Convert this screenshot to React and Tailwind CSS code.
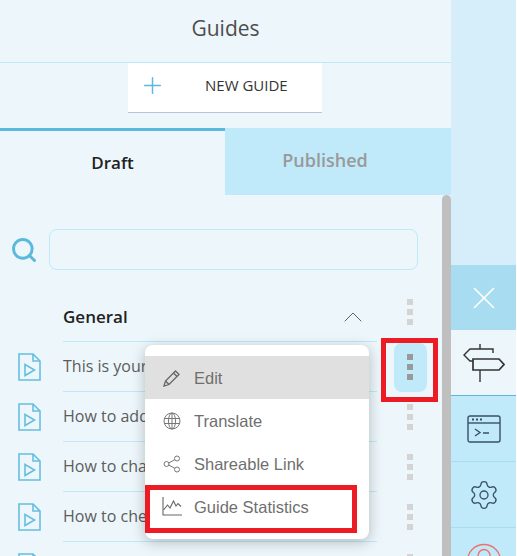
import React from 'react';
import { Plus, Search, ChevronUp, X, Settings } from 'lucide-react';

const sans = { fontFamily: '"Open Sans", "Noto Sans", sans-serif' };

// the popup covers the end of these titles, only the visible part is kept
const rows = ['This is your', 'How to add', 'How to cha', 'How to che', ''];

const FileIcon = () => (
  <svg width="23" height="28" viewBox="0 0 23 28" fill="none" stroke="#64bfe0" strokeWidth="1.6" className="shrink-0">
    <path d="M1 1h14l7 7v19H1z" />
    <path d="M15 1v7h7" />
    <path d="M7 11.500l9.500 5.500-9.500 5.500z" />
  </svg>
);

const Dots = ({ color = 'bg-[#d4d4d4]' }) => (
  <div className="flex flex-col gap-1">
    <span className={`w-[6px] h-[6px] ${color}`}></span>
    <span className={`w-[6px] h-[6px] ${color}`}></span>
    <span className={`w-[6px] h-[6px] ${color}`}></span>
  </div>
);

const Pen = () => (
  <svg width="18" height="18" viewBox="0 0 18 18" fill="none" stroke="#666" strokeWidth="1.300">
    <path d="M1 17l1.500-5L12.500 2l3.500 3.500L6 15.500z" />
    <path d="M2.500 12L6 15.500M10.500 4l3.500 3.500" />
  </svg>
);

const Earth = () => (
  <svg width="18" height="18" viewBox="0 0 18 18" fill="none" stroke="#777" strokeWidth="1">
    <circle cx="9" cy="9" r="8" />
    <ellipse cx="9" cy="9" rx="3.500" ry="8" />
    <path d="M9 1v16M1.500 6.500h15M1.500 11.500h15" />
  </svg>
);

const Share = () => (
  <svg width="18" height="18" viewBox="0 0 18 18" fill="none" stroke="#777" strokeWidth="1">
    <circle cx="3.500" cy="9" r="2.500" />
    <circle cx="14" cy="3.500" r="2.500" />
    <circle cx="14" cy="14.500" r="2.500" />
    <path d="M5.800 8l6-3.300M5.800 10l6 3.300" />
  </svg>
);

const Chart = () => (
  <svg width="20" height="19" viewBox="0 0 20 19" fill="none" stroke="#666" strokeWidth="1.100">
    <path d="M1 0v18h19" />
    <path d="M1.500 13l4-5 2.500 3 3.500-7 2.500 5 2-2.500 3 3" />
  </svg>
);

const Signpost = () => (
  <svg width="42" height="38" viewBox="0 0 42 38" fill="none" stroke="#333" strokeWidth="1.400">
    <path d="M17 0v5M17 26v12" />
    <path d="M30 9V5H7L1 11l6 6h3" />
    <path d="M10 26V15h26l5 5.500-5 5.500z" strokeWidth="1.700" />
  </svg>
);

const Terminal = () => (
  <svg width="34" height="28" viewBox="0 0 34 28" fill="none" stroke="#3a5068" strokeWidth="1.400">
    <rect x="1" y="1" width="32" height="26" rx="2" />
    <path d="M1 8h32" />
    <path d="M5 4.500h2M9 4.500h2M13 4.500h2" strokeWidth="1.800" />
    <path d="M8 14l5 3.500-5 3.500M16 18h6" />
  </svg>
);

const Help = () => (
  <svg width="36" height="36" viewBox="0 0 36 36" fill="none" stroke="#f07070" strokeWidth="1.400" className="shrink-0">
    <circle cx="18" cy="18" r="16.500" />
    <path d="M12 13c0-4 3-6.500 6-6.500s6 2.500 6 6c0 3-3 4.500-6 6" />
  </svg>
);

const MenuItem = ({ icon, label, active }) => (
  <div className={`h-[43px] flex items-center ${active ? 'bg-[#e0e0e0]' : ''}`}>
    <div className="w-[49px] flex justify-center pl-1">{icon}</div>
    <span className="text-[16.500px] text-[#6f6f6f] pt-[2px]" style={{ fontFamily: '"Liberation Sans", sans-serif' }}>{label}</span>
  </div>
);

const App = () => {
  return (
    <div className="relative w-[517px] h-[556px] overflow-hidden flex bg-white" style={sans}>
      <div className="w-[451px] h-full bg-[#edf7fb] flex flex-col shrink-0">
        <div className="h-[63px] shrink-0 border-b border-[#bde9fa] flex items-center justify-center text-[21px] text-[#4d4d4d] pb-[4px]">Guides</div>
        <div className="flex justify-center shrink-0 pr-[1px]">
          <div className="w-[194px] h-[50px] bg-white border-b border-[#b9c3dc] flex items-center pl-[11px] pb-[5px]">
            <Plus size={27} strokeWidth={1.300} color="#5ab9dc" />
            <span className="ml-[39px] text-[15px] text-[#333]">NEW GUIDE</span>
          </div>
        </div>
        <div className="mt-[15px] h-[67px] flex shrink-0">
          <div className="w-[225px] border-t-[3px] border-[#5ab9dc] flex items-center justify-center text-[17px] font-semibold text-[#222]">Draft</div>
          <div className="w-[226px] bg-[#c0eafa] flex items-center justify-center text-[18px] font-semibold text-[#999] pr-[26px] pb-[2px]">Published</div>
        </div>
        <div className="flex flex-1 min-h-0">
          <div className="w-[442px]">
            <div className="mt-[34px] flex items-center">
              <Search size={28} strokeWidth={2.500} color="#5ab9dc" className="ml-[10px]" />
              <div className="ml-[11px] w-[369px] h-[41px] border border-[#bde9fa] rounded-lg"></div>
            </div>
            <div className="mt-[22px] flex h-[50px]">
              <div className="w-[63px]"></div>
              <div className="w-[314px] border-b border-[#bde9fa] flex items-center justify-between">
                <span className="text-[17px] font-semibold text-[#222]">General</span>
                <ChevronUp size={32} strokeWidth={0.700} color="#555" className="mr-[8px]" />
              </div>
              <div className="flex-1 flex items-center justify-center pl-[1px] pb-[10px]"><Dots /></div>
            </div>
            {rows.map((row, i) => (
              <div key={i} className="flex h-[50px]">
                <div className="w-[63px] flex items-center pl-[18px]"><FileIcon /></div>
                <div className="w-[314px] border-b border-[#bde9fa] flex items-center text-[16px] text-[#5c5c5c] pb-[2px] whitespace-nowrap">{row}</div>
                <div className="flex-1 flex items-center justify-center pl-[1px]">
                  {i === 0 ? (
                    <div className="w-[33px] h-[49px] rounded-lg bg-[#c0eafa] flex items-center justify-center"><Dots color="bg-[#999]" /></div>
                  ) : <Dots />}
                </div>
              </div>
            ))}
          </div>
          <div className="w-[9px] bg-[#bfbfbf] rounded-t-md"></div>
        </div>
      </div>

      <div className="w-[65px] h-full bg-[#d5eef9] flex flex-col">
        <div className="h-[265px] shrink-0"></div>
        <div className="h-[65px] shrink-0 bg-[#a8dcf0] flex items-center justify-center"><X size={38} strokeWidth={1} color="#fff" /></div>
        <div className="h-[66px] shrink-0 bg-[#edf7fb] border-b border-[#5ab9dc] flex items-center justify-center"><Signpost /></div>
        <div className="flex-1 bg-[#c0eafa] flex flex-col">
          <div className="h-[66px] border-b border-[#a8dcf0] flex items-center justify-center"><Terminal /></div>
          <div className="h-[66px] border-b border-[#a8dcf0] flex items-center justify-center"><Settings size={32} strokeWidth={1} color="#3a5068" /></div>
          <div className="flex-1 flex justify-center pt-[15px]"><Help /></div>
        </div>
      </div>

      <div className="absolute left-[145px] top-[345px] w-[224px] h-[194px] bg-white rounded-lg shadow-[0_3px_14px_rgba(0,0,0,0.25)] pt-[11px]">
        <MenuItem active icon={<Pen />} label="Edit" />
        <MenuItem icon={<Earth />} label="Translate" />
        <MenuItem icon={<Share />} label="Shareable Link" />
        <MenuItem icon={<Chart />} label="Guide Statistics" />
      </div>

      <div className="absolute left-[145px] top-[485px] w-[212px] h-[48px] border-[5px] border-[#ed1c24]"></div>
      <div className="absolute left-[381px] top-[338px] w-[57px] h-[64px] border-[5px] border-[#ed1c24]"></div>
    </div>
  );
};

export default App;
